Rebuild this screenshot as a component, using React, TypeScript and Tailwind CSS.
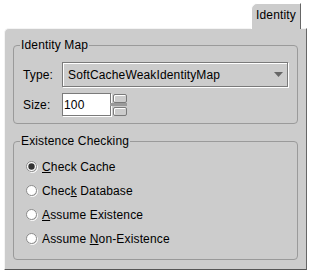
import React from "react";

const radios = [
  { pre: "", key: "C", post: "heck Cache", checked: true },
  { pre: "Chec", key: "k", post: " Database", checked: false },
  { pre: "", key: "A", post: "ssume Existence", checked: false },
  { pre: "Assume ", key: "N", post: "on-Existence", checked: false },
];

const Radio = ({ checked }: { checked: boolean }) => (
  <svg width="12" height="12" viewBox="0 0 12 12" className="shrink-0">
    <circle cx="6.5" cy="6.5" r="5" fill="none" stroke="#ffffff" />
    <circle cx="5.5" cy="5.5" r="5" fill="#ffffff" stroke="#8a8a8a" />
    {checked && <circle cx="5.5" cy="5.5" r="3.2" fill="#333333" />}
  </svg>
);

const SpinButton = () => (
  <div className="h-[9px] w-[14px] rounded-[2px] border border-[#7a7a7a] bg-[#cccccc] shadow-[inset_1px_1px_0_#ffffff]" />
);

export default function App() {
  return (
    <div className="w-[310px] h-[272px] bg-white font-['Liberation_Sans',Arial,sans-serif] text-[12px] tracking-[0.15px] text-black">
      <div className="flex h-[29px] justify-end pr-[9px] pt-[3px]">
        <div className="relative z-10 flex h-[26px] w-[50px] justify-center rounded-tl-[6px] border-l border-t border-l-white border-t-white border-r border-r-[#666666] bg-[#cccccc] pt-[4px] leading-[14px]">
          Identity
        </div>
      </div>

      <div className="-mt-px ml-[4px] h-[242px] w-[303px] rounded-tl-[5px] border border-t-[#f4f4f4] border-l-[#f4f4f4] border-r-[#666666] border-b-[#555555] bg-[#cccccc] px-[8px] pt-[9px]">
        <fieldset className="rounded-[4px] border border-[#9a9a9a] pb-[7px] pl-[9px] pr-[9px] pt-[10px]">
          <legend className="ml-[-3px] px-px leading-[14px]">Identity Map</legend>
          <div className="flex items-center">
            <span className="w-[39px]">Type:</span>
            <div className="flex h-[25px] flex-1 items-center justify-between border border-[#7a7a7a] pl-[5px] pr-[4px] shadow-[inset_1px_1px_0_#ffffff,1px_1px_0_#ffffff]">
              <span>SoftCacheWeakIdentityMap</span>
              <svg width="9" height="5" viewBox="0 0 9 5">
                <polygon points="0,0 9,0 4.5,5" fill="#666666" />
              </svg>
            </div>
          </div>
          <div className="mt-[6px] flex items-center">
            <span className="w-[39px]">Size:</span>
            <div className="flex h-[23px] w-[49px] items-center border border-[#7a7a7a] bg-white pl-px shadow-[1px_1px_0_#ffffff]">
              100
            </div>
            <div className="ml-[2px] flex flex-col">
              <SpinButton />
              <div className="-ml-[3px] h-[3px] w-[17px] bg-[#9a9a9a]" />
              <div className="mt-px">
                <SpinButton />
              </div>
            </div>
          </div>
        </fieldset>

        <fieldset className="mt-[10px] rounded-[4px] border border-[#9a9a9a] pb-[8px] pl-[12px] pt-[7px]">
          <legend className="ml-[-6px] px-px leading-[14px]">Existence Checking</legend>
          {radios.map((r) => (
            <div key={r.post} className="flex h-[24px] items-center gap-[4px]">
              <Radio checked={r.checked} />
              <span>
                {r.pre}
                <u className="underline-offset-1">{r.key}</u>
                {r.post}
              </span>
            </div>
          ))}
        </fieldset>
      </div>
    </div>
  );
}
